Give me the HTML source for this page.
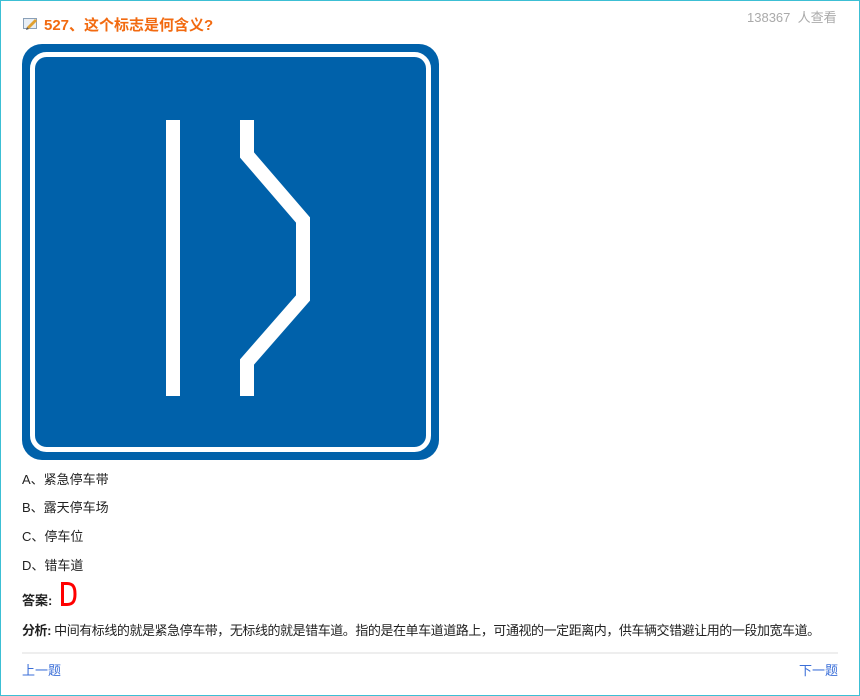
<!DOCTYPE html>
<html><head><meta charset="utf-8"><style>
html,body{margin:0;padding:0;}
body{width:860px;height:696px;position:relative;background:#fff;font-family:"Liberation Sans","Noto Sans CJK SC",sans-serif;overflow:hidden;}
.frame{position:absolute;left:0;top:0;width:858px;height:694px;border:1px solid #3cbfd4;}
.t{position:absolute;white-space:nowrap;font-size:13px;color:#222;}
</style></head><body>
<div class="frame"></div>
<svg style="position:absolute;left:23px;top:17px" width="16" height="14" viewBox="0 0 16 14"><rect x="0.5" y="1.5" width="13" height="10" fill="#e8eef5" stroke="#8aa0b8"/><path d="M4 10 L12 2 L14 4 L6 12 Z" fill="#e0a030"/><path d="M4 10 L6 12 L3 13 Z" fill="#555"/></svg>
<div class="t" style="left:44px;top:14px;font-size:15px;font-weight:bold;color:#f26a10;">527、这个标志是何含义?</div>
<div class="t" style="left:747px;top:7px;font-size:13px;color:#aaa;">138367&nbsp; 人查看</div>
<svg style="position:absolute;left:22px;top:44px" width="417" height="416" viewBox="0 0 417 416">
<rect x="0" y="0" width="417" height="416" rx="20" fill="#0061aa"/>
<rect x="10.5" y="10.5" width="396" height="395" rx="14" fill="none" stroke="#fff" stroke-width="5"/>
<rect x="144" y="76" width="14" height="276" fill="#fff"/>
<polyline points="225,76 225,111 281,176 281,254 225,318 225,352" fill="none" stroke="#fff" stroke-width="14" stroke-linejoin="miter"/>
</svg>
<div class="t" style="left:22px;top:469px;">A、紧急停车带</div>
<div class="t" style="left:22px;top:497px;">B、露天停车场</div>
<div class="t" style="left:22px;top:526px;">C、停车位</div>
<div class="t" style="left:22px;top:555px;">D、错车道</div>
<div class="t" style="left:22px;top:590px;font-weight:bold;">答案:</div>
<svg style="position:absolute;left:60px;top:582px" width="18" height="24" viewBox="0 0 18 24"><path d="M2.5 1.5 H7 C13 1.5 15 5 15 12 C15 19 13 22.5 7 22.5 H2.5 Z" fill="none" stroke="#f00" stroke-width="3"/></svg>
<div class="t" style="left:22px;top:620px;letter-spacing:-0.45px;"><b>分析:</b> 中间有标线的就是紧急停车带，无标线的就是错车道。指的是在单车道道路上，可通视的一定距离内，供车辆交错避让用的一段加宽车道。</div>
<div style="position:absolute;left:22px;top:652px;width:816px;height:2px;background:#eee;"></div>
<div class="t" style="left:22px;top:660px;color:#3b6fd8;">上一题</div>
<div class="t" style="left:799px;top:660px;color:#3b6fd8;">下一题</div>
</body></html>
